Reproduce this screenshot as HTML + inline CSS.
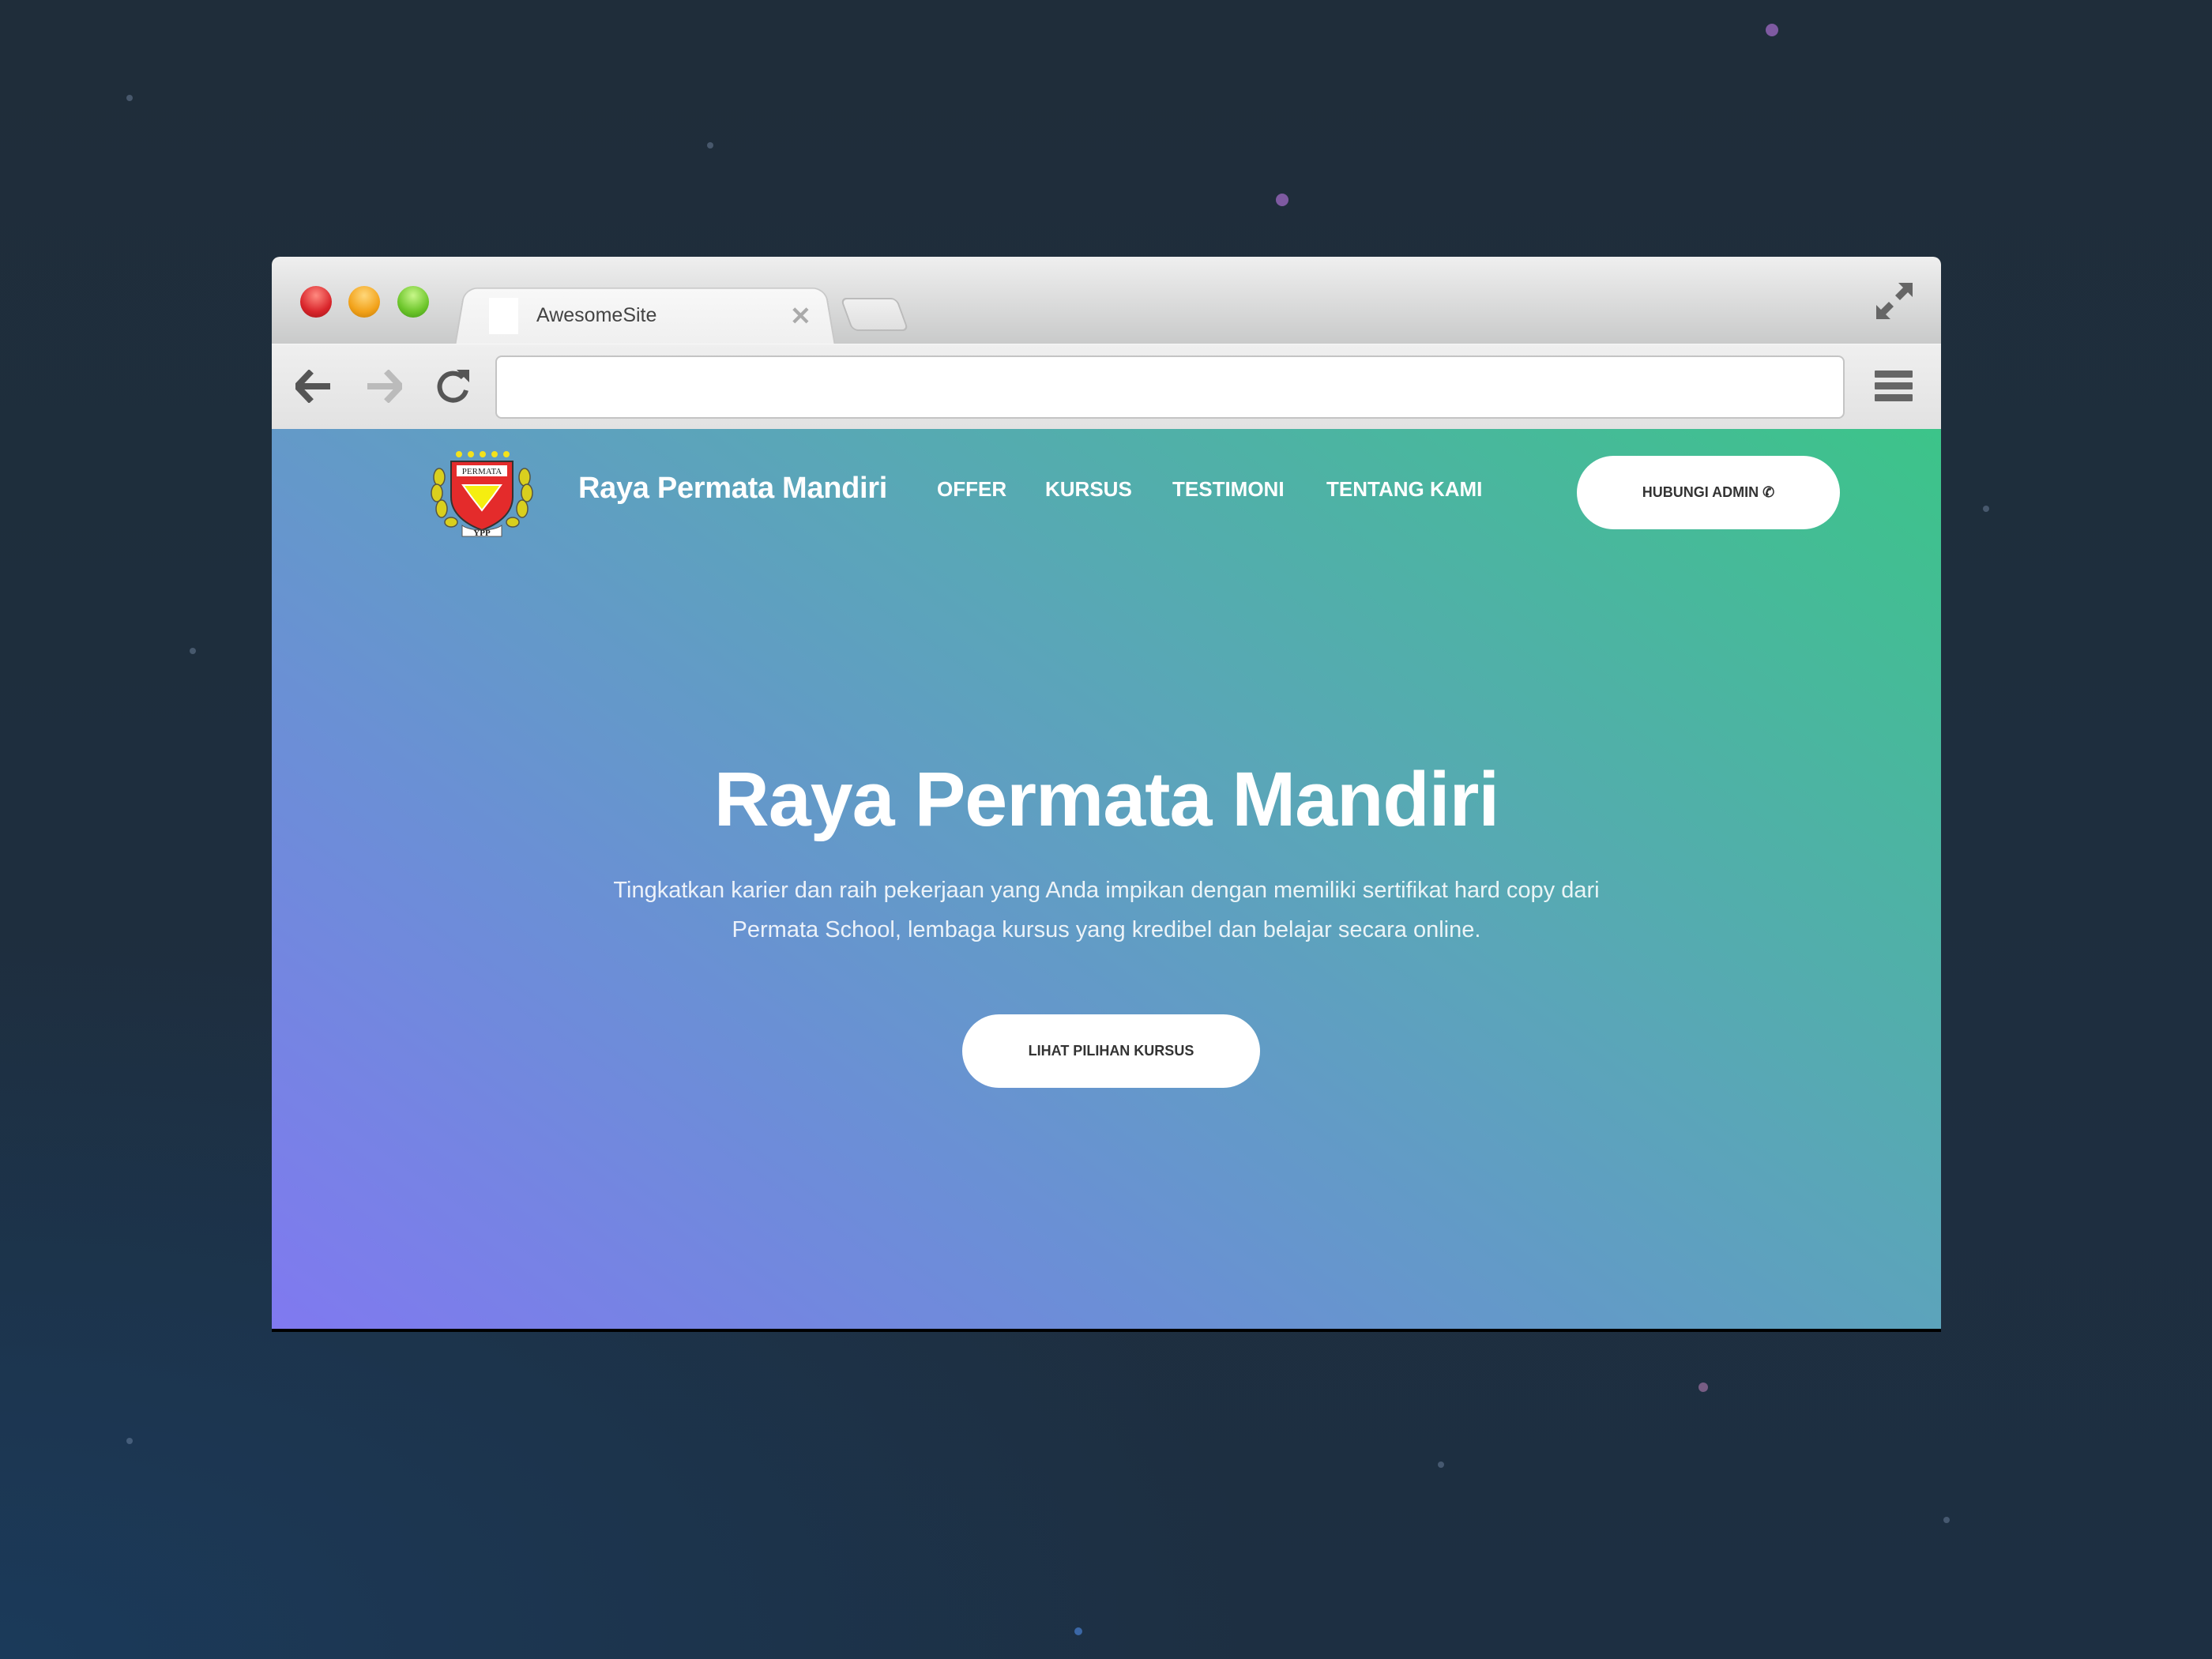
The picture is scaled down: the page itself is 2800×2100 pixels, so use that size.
<!DOCTYPE html>
<html><head><meta charset="utf-8"><style>
*{margin:0;padding:0;box-sizing:border-box}
body{width:2800px;height:2100px;overflow:hidden;position:relative;font-family:"Liberation Sans",sans-serif;
background:radial-gradient(ellipse 1600px 900px at 0% 100%,#1b3a5a 0%,rgba(27,50,75,0) 100%),linear-gradient(180deg,#1f2d3a 0%,#1d2f42 100%);}
.star{position:absolute;border-radius:50%;background:rgba(150,170,200,.35)}
.win{position:absolute;left:344px;top:325px;width:2113px;height:1361px;border-radius:10px 10px 0 0;overflow:hidden;background:#000}
.tabs{position:absolute;left:0;top:0;width:100%;height:110px;background:linear-gradient(#efefef,#c9caca)}
.tool{position:absolute;left:0;top:110px;width:100%;height:108px;background:linear-gradient(#efefef,#e2e2e2);border-top:1px solid #f8f8f8}
.light{position:absolute;top:37px;width:40px;height:40px;border-radius:50%}
.tab{position:absolute;left:231px;top:33px;width:483px;height:80px;background:linear-gradient(#f8f8f8,#efefef);border-radius:18px 18px 0 0;border:2px solid #c8c8c8;border-bottom:none;transform:perspective(300px) rotateX(12deg);transform-origin:bottom}
.addr{position:absolute;left:283px;top:14px;width:1708px;height:80px;background:#fff;border:2px solid #c4c4c4;border-radius:8px}
.content{position:absolute;left:0;top:218px;width:2113px;height:1139px;background:linear-gradient(35deg,#8079f0 0%,#6b8fd6 30%,#5aa6b8 60%,#3cc489 100%)}
.nav{position:absolute;color:#fff;font-weight:bold;font-size:26px;top:390px}
.btn{position:absolute;background:#fff;border-radius:60px;color:#333;font-weight:bold;text-align:center}
</style></head><body>
<div class="star" style="left:2235px;top:30px;width:16px;height:16px;background:rgba(190,120,230,.6)"></div>
<div class="star" style="left:1615px;top:245px;width:16px;height:16px;background:rgba(190,120,230,.6)"></div>
<div class="star" style="left:2150px;top:1750px;width:12px;height:12px;background:rgba(210,140,200,.5)"></div>
<div class="star" style="left:160px;top:120px;width:8px;height:8px"></div>
<div class="star" style="left:895px;top:180px;width:8px;height:8px"></div>
<div class="star" style="left:2510px;top:640px;width:8px;height:8px"></div>
<div class="star" style="left:240px;top:820px;width:8px;height:8px"></div>
<div class="star" style="left:1820px;top:1850px;width:8px;height:8px"></div>
<div class="star" style="left:160px;top:1820px;width:8px;height:8px"></div>
<div class="star" style="left:2460px;top:1920px;width:8px;height:8px"></div>
<div class="star" style="left:1360px;top:2060px;width:10px;height:10px;background:rgba(80,140,230,.6)"></div>
<div class="win">
 <div class="tabs">
  <div class="light" style="left:36px;background:radial-gradient(circle at 50% 30%,#ff8a80,#d9252b 60%,#a01418)"></div>
  <div class="light" style="left:97px;background:radial-gradient(circle at 50% 30%,#ffd77a,#f2a21a 60%,#c27a08)"></div>
  <div class="light" style="left:159px;background:radial-gradient(circle at 50% 30%,#c8f78a,#6cc52a 60%,#3f9615)"></div>
  <div class="tab"></div>
  <div style="position:absolute;left:275px;top:52px;width:37px;height:46px;background:#fff"></div>
  <div style="position:absolute;left:335px;top:60px;font-size:25px;color:#444">AwesomeSite</div>
  <div style="position:absolute;left:656px;top:56px;font-size:32px;color:#aaa;font-weight:bold">✕</div>
  <div style="position:absolute;left:727px;top:52px;width:72px;height:42px;border:2px solid #bbb;border-radius:8px;background:linear-gradient(#f0f0f0,#e0e0e0);transform:skewX(20deg)"></div>
  <svg style="position:absolute;left:2031px;top:33px" width="46" height="46" viewBox="0 0 46 46"><path d="M46 0H28l6 6-10 10 6 6 10-10 6 6zM0 46h18l-6-6 10-10-6-6L6 34 0 28z" fill="#666"/></svg>
 </div>
 <div class="tool">
  <svg style="position:absolute;left:30px;top:32px" width="46" height="42" viewBox="0 0 46 42"><path d="M20 2L2 21l18 19M4 21h40" stroke="#555" stroke-width="8" fill="none"/></svg>
  <svg style="position:absolute;left:119px;top:32px" width="46" height="42" viewBox="0 0 46 42"><path d="M26 2l18 19-18 19M42 21H2" stroke="#bbb" stroke-width="8" fill="none"/></svg>
  <svg style="position:absolute;left:206px;top:30px" width="46" height="46" viewBox="0 0 46 46"><path d="M36 12A17 17 0 1 0 40 28" stroke="#555" stroke-width="6" fill="none"/><path d="M28 2h16v16z" fill="#555"/></svg>
  <div class="addr"></div>
  <div style="position:absolute;left:2029px;top:33px;width:48px">
   <div style="height:9px;background:#666;margin-bottom:6px;border-radius:1px"></div>
   <div style="height:9px;background:#666;margin-bottom:6px;border-radius:1px"></div>
   <div style="height:9px;background:#666;border-radius:1px"></div>
  </div>
 </div>
 <div class="content">
  <svg style="position:absolute;left:197px;top:26px" width="138" height="112" viewBox="0 0 138 112">
   <g fill="#f3e21b"><circle cx="40" cy="6" r="4"/><circle cx="55" cy="6" r="4"/><circle cx="70" cy="6" r="4"/><circle cx="85" cy="6" r="4"/><circle cx="100" cy="6" r="4"/></g>
   <g fill="#d9cf1e" stroke="#554" stroke-width="1.5"><ellipse cx="15" cy="35" rx="7" ry="11"/><ellipse cx="12" cy="55" rx="7" ry="11"/><ellipse cx="18" cy="75" rx="7" ry="11"/><ellipse cx="30" cy="92" rx="8" ry="6"/><ellipse cx="123" cy="35" rx="7" ry="11"/><ellipse cx="126" cy="55" rx="7" ry="11"/><ellipse cx="120" cy="75" rx="7" ry="11"/><ellipse cx="108" cy="92" rx="8" ry="6"/></g>
   <path d="M30 15h78v45c0 22-20 35-39 42-19-7-39-20-39-42z" fill="#e42b2b" stroke="#333" stroke-width="2"/>
   <rect x="37" y="20" width="64" height="14" fill="#fff"/><text x="69" y="31" font-size="11" text-anchor="middle" font-family="Liberation Serif,serif" fill="#222">PERMATA</text>
   <path d="M45 45h48l-10 14-14 18-14-18z" fill="#f5ee10" stroke="#fff" stroke-width="2"/>
   <path d="M44 96c10 8 40 8 50 0v14H44z" fill="#fff" stroke="#555" stroke-width="1"/><text x="69" y="109" font-size="11" text-anchor="middle" font-family="Liberation Serif,serif" font-weight="bold" fill="#222">YPP</text>
  </svg>
  <div style="position:absolute;left:388px;top:54px;color:#fff;font-weight:bold;font-size:38px;letter-spacing:-.3px">Raya Permata Mandiri</div>
  <div class="nav" style="left:842px;top:61px">OFFER</div>
  <div class="nav" style="left:979px;top:61px">KURSUS</div>
  <div class="nav" style="left:1140px;top:61px">TESTIMONI</div>
  <div class="nav" style="left:1335px;top:61px">TENTANG KAMI</div>
  <div class="btn" style="left:1652px;top:34px;width:333px;height:93px;line-height:93px;font-size:18px">HUBUNGI ADMIN ✆</div>
  <div style="position:absolute;left:0;width:100%;top:413px;text-align:center;color:#fff;font-weight:bold;font-size:97px;letter-spacing:-1px">Raya Permata Mandiri</div>
  <div style="position:absolute;left:300px;width:1513px;top:559px;text-align:center;color:rgba(255,255,255,.88);font-size:29px;line-height:50px">Tingkatkan karier dan raih pekerjaan yang Anda impikan dengan memiliki sertifikat hard copy dari<br>Permata School, lembaga kursus yang kredibel dan belajar secara online.</div>
  <div class="btn" style="left:874px;top:741px;width:377px;height:93px;line-height:93px;font-size:18px">LIHAT PILIHAN KURSUS</div>
 </div>
</div>
</body></html>
